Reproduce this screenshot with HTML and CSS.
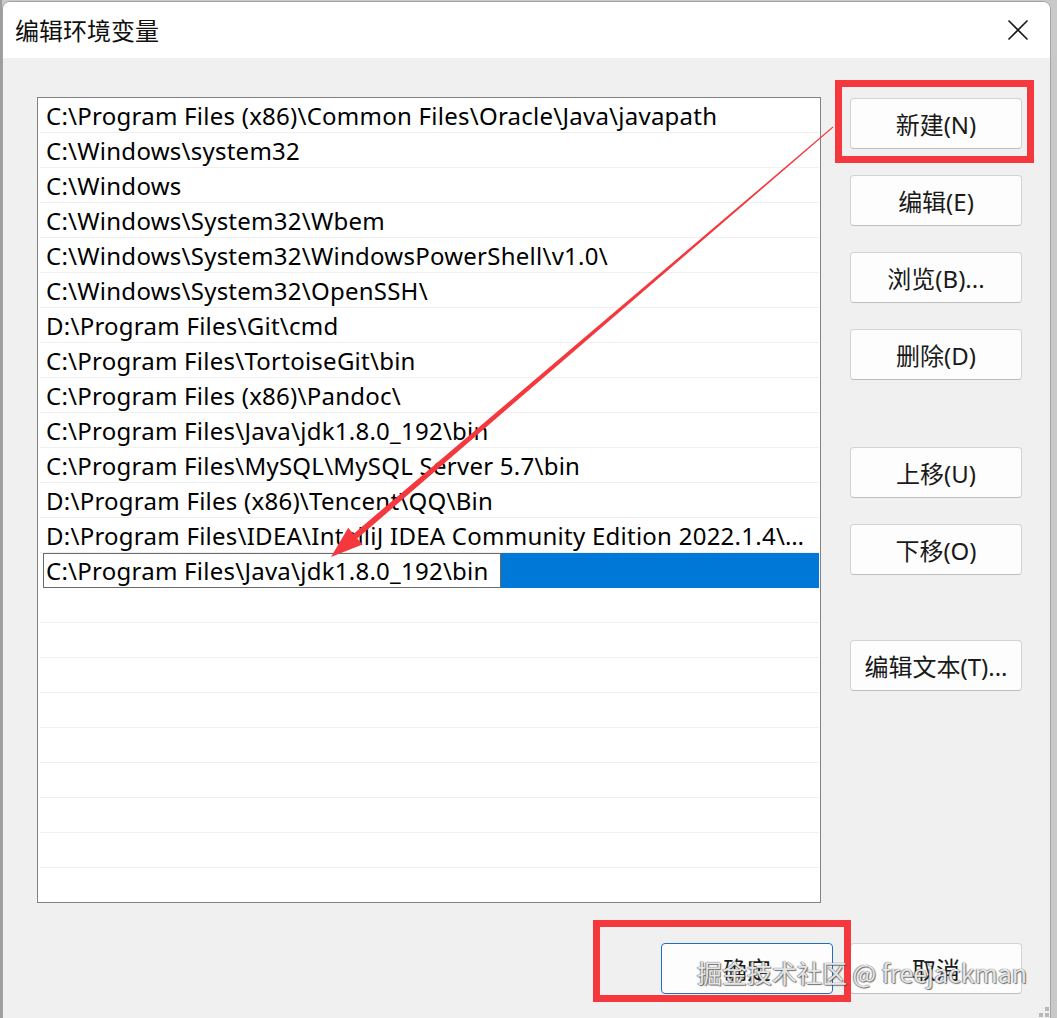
FILE: index.html
```html
<!DOCTYPE html>
<html lang="zh-CN">
<head>
<meta charset="utf-8">
<title>编辑环境变量</title>
<link rel="stylesheet" href="styles.css">
</head>
<body>
<div class="screen">
  <div class="window">
    <div class="titlebar">
      <span class="title">编辑环境变量</span>
      <span class="close" aria-label="关闭">
        <svg width="22" height="22" viewBox="0 0 22 22"><path d="M1.5 1.5 L20.5 20.5 M20.5 1.5 L1.5 20.5" stroke="#1b1b1b" stroke-width="1.6" fill="none"/></svg>
      </span>
    </div>
    <div class="content">
      <div class="main">
        <div class="list">
          <div class="row">C:\Program Files (x86)\Common Files\Oracle\Java\javapath</div>
          <div class="row">C:\Windows\system32</div>
          <div class="row">C:\Windows</div>
          <div class="row">C:\Windows\System32\Wbem</div>
          <div class="row">C:\Windows\System32\WindowsPowerShell\v1.0\</div>
          <div class="row">C:\Windows\System32\OpenSSH\</div>
          <div class="row">D:\Program Files\Git\cmd</div>
          <div class="row">C:\Program Files\TortoiseGit\bin</div>
          <div class="row">C:\Program Files (x86)\Pandoc\</div>
          <div class="row">C:\Program Files\Java\jdk1.8.0_192\bin</div>
          <div class="row">C:\Program Files\MySQL\MySQL Server 5.7\bin</div>
          <div class="row">D:\Program Files (x86)\Tencent\QQ\Bin</div>
          <div class="row">D:\Program Files\IDEA\IntelliJ IDEA Community Edition 2022.1.4\bin</div>
          <div class="row editing"><span class="editbox">C:\Program Files\Java\jdk1.8.0_192\bin</span><span class="selfill"></span></div>
          <div class="row"></div>
          <div class="row"></div>
          <div class="row"></div>
          <div class="row"></div>
          <div class="row"></div>
          <div class="row"></div>
          <div class="row"></div>
          <div class="row"></div>
          <div class="row"></div>
        </div>
        <div class="side">
          <span class="btn">新建(N)</span>
          <span class="btn">编辑(E)</span>
          <span class="btn">浏览(B)...</span>
          <span class="btn">删除(D)</span>
          <span class="btn group">上移(U)</span>
          <span class="btn">下移(O)</span>
          <span class="btn group">编辑文本(T)...</span>
        </div>
      </div>
      <div class="footer">
        <span class="btn default">确定</span>
        <span class="btn">取消</span>
      </div>
    </div>
  </div>

  <!-- markup drawn on top of the dialog -->
  <svg class="marks" width="1057" height="1018" viewBox="0 0 1057 1018">
    <rect x="838.5" y="83.5" width="192" height="76" fill="none" stroke="#f4383d" stroke-width="7"/>
    <rect x="596.5" y="923.5" width="251" height="75" fill="none" stroke="#f4383d" stroke-width="7"/>
    <polygon fill="#f4383d" points="331,557 362.5,544.6 357.3,538.5 833.3,127.4 832.7,126.6 353.4,533.9 348.2,527.8"/>
    <g fill="#b9b9b9">
      <rect x="1045" y="1007" width="4" height="4"/>
      <rect x="1039" y="1013" width="4" height="4"/>
      <rect x="1045" y="1013" width="4" height="4"/>
    </g>
  </svg>
  <div class="watermark">掘金技术社区 @ freejackman</div>
</div>
</body>
</html>
```

FILE: styles.css
```css
html, body {
  margin: 0;
  padding: 0;
}

body {
  background: #c9c9c9;
  font-family: "Noto Sans", "Noto Sans CJK SC", sans-serif;
  color: #000;
}

.screen {
  position: relative;
  width: 1057px;
  height: 1018px;
  overflow: hidden;
  padding: 1px 0 0 2px;
  box-sizing: border-box;
  background: linear-gradient(to right, #9e9e9e 0, #9e9e9e 2px, #c9c9c9 2px);
}

.window {
  width: 1049px;
  height: 1040px;
  box-sizing: border-box;
  border: 1px solid #a4a4a4;
  border-radius: 8px 8px 0 0;
  background: #f0f0f0;
  overflow: hidden;
}

.titlebar {
  height: 56px;
  background: #ffffff;
  display: flex;
  align-items: center;
  justify-content: space-between;
  padding: 0 21px 0 12px;
}

.title {
  font-family: "Noto Sans CJK SC", sans-serif;
  font-size: 24px;
  line-height: 1;
  color: #111;
}

.close {
  display: flex;
  width: 22px;
  height: 22px;
}

.content {
  padding: 39px 28px 0 34px;
}

.main {
  display: flex;
  gap: 29px;
  align-items: flex-start;
}

.list {
  width: 784px;
  height: 806px;
  box-sizing: border-box;
  border: 1px solid #828282;
  background: #ffffff;
  padding: 0 1px 0 2px;
  overflow: hidden;
}

.row {
  height: 35px;
  box-sizing: border-box;
  border-bottom: 1px solid #efefef;
  padding-left: 6px;
  font-size: 24px;
  letter-spacing: 0.25px;
  line-height: 35px;
  white-space: nowrap;
  overflow: hidden;
  text-overflow: ellipsis;
}

.row.editing {
  padding-left: 3px;
  border-bottom: none;
  display: flex;
}

.editbox {
  width: 458px;
  height: 35px;
  box-sizing: border-box;
  border: 1px solid #6b6b6b;
  background: #ffffff;
  padding-left: 2px;
  line-height: 33px;
}

.selfill {
  flex: 1;
  background: #0078d7;
}

.side {
  width: 172px;
  display: flex;
  flex-direction: column;
  gap: 26px;
  padding-top: 1px;
}

.btn {
  display: flex;
  align-items: center;
  justify-content: center;
  width: 172px;
  height: 51px;
  box-sizing: border-box;
  border: 1px solid #d3d3d3;
  border-bottom-color: #bdbdbd;
  border-radius: 4px;
  background: #fdfdfd;
  font-size: 24px;
  color: #1a1a1a;
}

.side .group {
  margin-top: 41px;
}

.side .group:last-child {
  margin-top: 39px;
}

.footer {
  display: flex;
  justify-content: flex-end;
  gap: 17px;
  margin-top: 40px;
}

.btn.default {
  border: 1px solid #1f6fc0;
}

.marks {
  position: absolute;
  left: 0;
  top: 0;
  pointer-events: none;
}

.watermark {
  position: absolute;
  left: 697px;
  top: 952px;
  font-family: "Noto Sans CJK SC", sans-serif;
  font-size: 25px;
  line-height: 40px;
  color: rgba(250, 250, 250, 0.9);
  text-shadow: 0 0 1px #555, 1px 1px 1px rgba(60, 60, 60, 0.7), -1px 0 1px rgba(90, 90, 90, 0.5);
  white-space: nowrap;
  pointer-events: none;
}
```
